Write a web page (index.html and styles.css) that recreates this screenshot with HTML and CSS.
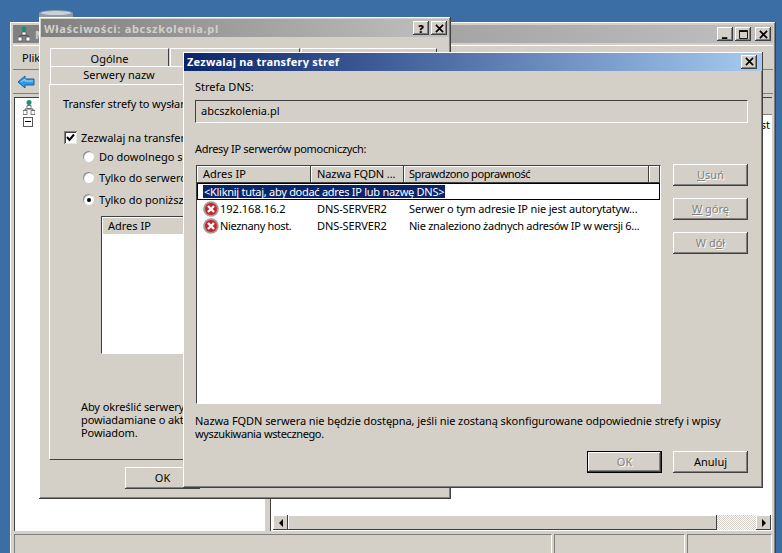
FILE: index.html
```html
<!DOCTYPE html>
<html lang="pl">
<head>
    <meta charset="utf-8">
    <title>Zezwalaj na transfery stref</title>
    <link rel="stylesheet" href="styles.css">
</head>
<body>
    <svg class="desk-icon" width="36" height="8" viewBox="0 0 36 8">
        <path d="M1 3 a17 3 0 0 1 34 0 v5 h-34 z" fill="#8d9aa6"/>
        <ellipse cx="18" cy="3" rx="15" ry="2" fill="#c9d2da"/>
    </svg>

    <!-- konsola w tle -->
    <div class="win main-win">
        <div class="title inactive">
            <svg class="tree-icon" width="12" height="16" viewBox="0 0 12 16"><circle cx="6" cy="3" r="2.500" fill="#1f8f76"/><path d="M6 5v4M2 12V9.500h8V12" fill="none" stroke="#555"/><path d="M4 6h4v3H4zM0 11h4v4H0zM8 11h4v4H8z" fill="#fff" stroke="#555" stroke-width=".8"/></svg>
            <span class="title-text">M</span>
            <span class="title-btns">
                <span class="cap-btn"><svg viewBox="0 0 10 10"><path d="M1 8h6v2H1z"/></svg></span>
                <span class="cap-btn"><svg viewBox="0 0 10 10"><path d="M0.500 1.500h9v8h-9z M0.500 0.500h9v1h-9z" fill="none" stroke="#000"/></svg></span>
                <span class="cap-btn gap"><svg viewBox="0 0 10 10"><path d="M1 1l8 8M9 1l-8 8" stroke="#000" stroke-width="1.800"/></svg></span>
            </span>
        </div>
        <div class="menubar"><span>Plik</span></div>
        <div class="toolbar">
            <svg width="18" height="16" viewBox="0 0 18 16"><path d="M1 8l7-6v3h9v6H8v3z" fill="#2c9be0" stroke="#1c5f9c"/><path d="M4 8l4-3v2h8" fill="none" stroke="#a8e0fa"/></svg>
        </div>
        <div class="panes">
            <div class="tree">
                <svg class="tree-icon" width="12" height="17" viewBox="0 0 12 16"><circle cx="6" cy="3" r="2.500" fill="#1f8f76"/><path d="M6 5v4M2 12V9.500h8V12" fill="none" stroke="#555"/><path d="M4 6h4v3H4zM0 11h4v4H0zM8 11h4v4H8z" fill="#fff" stroke="#555" stroke-width=".8"/></svg>
                <span class="expander"></span>
            </div>
            <div class="right-pane">
                <div class="pane-head"></div>
                <div class="pane-list"><span>st</span></div>
                <div class="hscroll">
                    <span class="sb-btn"><i class="arr-left"></i></span>
                    <span class="sb-thumb"></span>
                    <span class="sb-track"></span>
                    <span class="sb-btn"><i class="arr-right"></i></span>
                </div>
            </div>
        </div>
        <div class="statusbar">
            <span class="st-a"></span><span class="st-b"></span><span class="st-c"></span>
        </div>
    </div>

    <!-- okno wlasciwosci -->
    <div class="win props-win">
        <div class="title inactive">
            <span class="title-text">Właściwości: abcszkolenia.pl</span>
            <span class="title-btns">
                <span class="cap-btn"><b>?</b></span>
                <span class="cap-btn"><svg viewBox="0 0 10 10"><path d="M1 1l8 8M9 1l-8 8" stroke="#000" stroke-width="1.800"/></svg></span>
            </span>
        </div>
        <div class="tabs">
            <div class="tab-row">
                <span class="tab w-a">Ogólne</span>
                <span class="tab w-b"></span>
                <span class="tab w-c"></span>
            </div>
            <div class="tab-row">
                <span class="tab w-d second">Serwery nazw</span>
            </div>
        </div>
        <div class="tab-panel">
            <p class="intro">Transfer strefy to wysłan</p>
            <label class="check-line"><span class="check"><svg width="9" height="9" viewBox="0 0 9 9"><path d="M1 4l2.500 3L8 1.500" fill="none" stroke="#000" stroke-width="2"/></svg></span>Zezwalaj na transfer</label>
            <div class="radios">
                <label class="radio-line"><span class="radio"></span>Do dowolnego se</label>
                <label class="radio-line"><span class="radio"></span>Tylko do serweró</label>
                <label class="radio-line last"><span class="radio on"></span>Tylko do poniższy</label>
            </div>
            <div class="inner-list">
                <div class="inner-head">Adres IP</div>
            </div>
            <p class="hint">Aby określić serwery<br>powiadamiane o aktu<br>Powiadom.</p>
        </div>
        <div class="props-foot"><button class="btn">OK</button></div>
    </div>

    <!-- dialog na wierzchu -->
    <div class="win dialog">
        <div class="title active">
            <span class="title-text">Zezwalaj na transfery stref</span>
            <span class="title-btns">
                <span class="cap-btn"><svg viewBox="0 0 10 10"><path d="M1 1l8 8M9 1l-8 8" stroke="#000" stroke-width="1.800"/></svg></span>
            </span>
        </div>
        <div class="dlg-body">
            <div class="lbl">Strefa DNS:</div>
            <div class="field">abcszkolenia.pl</div>
            <div class="lbl lbl-second">Adresy IP serwerów pomocniczych:</div>
            <div class="list-row">
                <div class="list">
                    <div class="list-head">
                        <span class="col-a">Adres IP</span>
                        <span class="col-b">Nazwa FQDN ...</span>
                        <span class="col-c head-check">Sprawdzono poprawność</span>
                        <span class="col-d"></span>
                    </div>
                    <div class="add-row"><span>&lt;Kliknij tutaj, aby dodać adres IP lub nazwę DNS&gt;</span></div>
                    <div class="row">
                        <span class="col-a cell-ip"><svg class="err" width="16" height="16" viewBox="0 0 16 16"><circle cx="8" cy="8" r="7.800" fill="#a39c9c"/><circle cx="8" cy="8" r="6" fill="#c4252b"/><path d="M5 5l6 6M11 5l-6 6" stroke="#fff" stroke-width="2.400"/></svg>192.168.16.2</span>
                        <span class="col-b">DNS-SERVER2</span>
                        <span class="col-c msg-a">Serwer o tym adresie IP nie jest autorytatyw...</span>
                    </div>
                    <div class="row">
                        <span class="col-a cell-ip host"><svg class="err" width="16" height="16" viewBox="0 0 16 16"><circle cx="8" cy="8" r="7.800" fill="#a39c9c"/><circle cx="8" cy="8" r="6" fill="#c4252b"/><path d="M5 5l6 6M11 5l-6 6" stroke="#fff" stroke-width="2.400"/></svg>Nieznany host.</span>
                        <span class="col-b">DNS-SERVER2</span>
                        <span class="col-c msg-b">Nie znaleziono żadnych adresów IP w wersji 6...</span>
                    </div>
                </div>
                <div class="side-btns">
                    <button class="btn off"><u>U</u>suń</button>
                    <button class="btn off"><u>W</u> górę</button>
                    <button class="btn off">W d<u>ó</u>ł</button>
                </div>
            </div>
            <p class="note">Nazwa FQDN serwera nie będzie dostępna, jeśli nie zostaną skonfigurowane odpowiednie strefy i wpisy<br><span class="note-end">wyszukiwania wstecznego.</span></p>
            <div class="dlg-foot">
                <button class="btn off default">OK</button>
                <button class="btn">Anuluj</button>
            </div>
        </div>
    </div>
</body>
</html>
```

FILE: styles.css
```css
:root {
    --face: #d4d0c8;
    --shadow: #808080;
    --dark: #404040;
}

* {
    box-sizing: border-box;
}

html, body {
    height: 100%;
}

body {
    margin: 0;
    height: 553px;
    overflow: hidden;
    position: relative;
    background-color: #3a6ea5;
    color: #000;
    font-family: "Noto Sans", sans-serif;
    font-size: 11px;
    line-height: 13px;
}

p {
    margin: 0;
}

.desk-icon {
    position: absolute;
    left: 38px;
    top: 10px;
}

/* okna */
.win {
    position: absolute;
    display: flex;
    flex-direction: column;
    background-color: var(--face);
    box-shadow: inset -1px -1px var(--dark), inset 1px 1px #fff, inset -2px -2px var(--shadow);
}
.main-win {
    left: 10px;
    top: 22px;
    width: 766px;
    height: 540px;
    padding: 3px;
}
.props-win {
    left: 39px;
    top: 17px;
    width: 412px;
    height: 482px;
    padding: 2px;
}
.dialog {
    left: 183px;
    top: 52px;
    width: 580px;
    height: 436px;
    padding: 1px;
}

.title {
    flex: none;
    display: flex;
    align-items: center;
    height: 18px;
    padding: 0 2px 0 3px;
    font-weight: bold;
    color: #fff;
}
.inactive {
    background: linear-gradient(to right, #808080, #c0c0c0);
    color: #d4d0c8;
}
.active {
    padding-right: 5px;
    padding-bottom: 1px;
    letter-spacing: .22px;
    background: linear-gradient(to right, #0a246a, #a6caf0);
}
.props-win .title-text {
    letter-spacing: .68px;
}
.title-text {
    flex: 1;
    white-space: nowrap;
    overflow: hidden;
}
.main-win .title {
    gap: 5px;
    padding-left: 5px;
}
.title-btns {
    display: flex;
    gap: 2px;
}
.cap-btn {
    display: flex;
    align-items: center;
    justify-content: center;
    width: 16px;
    height: 14px;
    color: #000;
    background-color: var(--face);
    box-shadow: inset -1px -1px var(--dark), inset 1px 1px #fff, inset -2px -2px var(--shadow);
}
.cap-btn svg {
    width: 9px;
    height: 9px;
}
.cap-btn.gap {
    margin-left: 2px;
}

/* konsola */
.menubar {
    flex: none;
    height: 25px;
    margin-top: 2px;
    padding: 5px 9px;
    border-top: 1px solid #fff;
    border-bottom: 1px solid var(--shadow);
}
.toolbar {
    flex: none;
    height: 24px;
    padding: 4px 4px;
    border-bottom: 1px solid var(--shadow);
}
.panes {
    flex: none;
    display: flex;
    gap: 5px;
    height: 434px;
    margin: 3px 1px 0;
}
.tree {
    display: flex;
    flex-direction: column;
    align-items: flex-start;
    width: 251px;
    padding: 1px 8px;
    background-color: #fff;
    border-left: 1px solid var(--dark);
    border-top: 1px solid var(--dark);
}
.expander {
    width: 10px;
    height: 10px;
    margin-top: 1px;
    position: relative;
    border: 1px solid #555;
}
.expander::after {
    content: "";
    position: absolute;
    left: 1px;
    right: 1px;
    top: 3px;
    height: 1px;
    background-color: #000;
}
.right-pane {
    flex: 1;
    display: flex;
    flex-direction: column;
    background-color: #fff;
    border-left: 1px solid var(--dark);
    border-top: 1px solid var(--dark);
}
.pane-head {
    flex: none;
    height: 17px;
    background-color: var(--face);
    box-shadow: inset 0 -1px var(--shadow);
}
.pane-list {
    flex: 1;
    padding: 3px 2px 0 0;
    text-align: right;
}
.hscroll {
    flex: none;
    display: flex;
    height: 15px;
    margin: 0 1px 1px 2px;
}
.sb-btn {
    flex: none;
    display: flex;
    align-items: center;
    justify-content: center;
    width: 15px;
    background-color: var(--face);
    box-shadow: inset -1px -1px var(--dark), inset 1px 1px #fff;
}
.sb-thumb {
    flex: none;
    width: 429px;
    background-color: var(--face);
    box-shadow: inset -1px -1px var(--dark), inset 1px 1px #fff;
}
.sb-track {
    flex: 1;
    background: repeating-conic-gradient(#fff 0 25%, var(--face) 0 50%) 0 0 / 2px 2px;
}
.arr-left, .arr-right {
    width: 0;
    height: 0;
    border-top: 4px solid transparent;
    border-bottom: 4px solid transparent;
}
.arr-left {
    border-right: 4px solid #000;
}
.arr-right {
    border-left: 4px solid #000;
}
.statusbar {
    flex: none;
    display: flex;
    gap: 2px;
    height: 20px;
    margin: 3px 1px 0;
}
.statusbar span {
    border-top: 1px solid var(--shadow);
    border-left: 1px solid var(--shadow);
    border-right: 1px solid #fff;
}
.st-a {
    width: 539px;
}
.st-b {
    width: 131px;
}
.st-c {
    width: 85px;
}

/* wlasciwosci */
.tabs {
    flex: none;
    padding: 11px 0 0 9px;
}
.tab-row {
    display: flex;
    gap: 1px;
    height: 18px;
}
.tab {
    display: block;
    height: 20px;
    padding-top: 3px;
    text-align: center;
    background-color: var(--face);
    border-top: 1px solid #fff;
    border-left: 1px solid #fff;
    border-right: 1px solid var(--dark);
}
.tab.second {
    height: 18px;
    padding-top: 1px;
    border-right-color: #fff;
}
.w-a {
    width: 119px;
}
.w-b {
    width: 130px;
}
.w-c {
    width: 136px;
}
.w-d {
    width: 138px;
}
.tab-panel {
    flex: none;
    display: flex;
    flex-direction: column;
    align-items: flex-start;
    height: 376px;
    width: 392px;
    margin-left: 8px;
    padding: 12px 13px 0;
    border-top: 1px solid #fff;
    border-left: 1px solid #fff;
    border-bottom: 1px solid var(--dark);
    border-right: 1px solid var(--dark);
}
.intro {
    white-space: nowrap;
    letter-spacing: -.1px;
}
.check-line, .radio-line {
    display: flex;
    align-items: center;
    white-space: nowrap;
}
.check-line {
    gap: 4px;
    margin-top: 20px;
    margin-left: 1px;
    height: 14px;
}
.check {
    display: flex;
    align-items: center;
    justify-content: center;
    width: 13px;
    height: 13px;
    background-color: #fff;
    box-shadow: inset 1px 1px var(--shadow), inset -1px -1px #e8e6e0, inset 2px 2px var(--dark);
}
.radios {
    display: flex;
    flex-direction: column;
    gap: 7px;
    margin: 5px 0 0 20px;
}
.radio-line {
    gap: 5px;
    height: 14px;
}
.radio-line.last {
    margin-top: 1px;
}
.radio {
    position: relative;
    width: 11px;
    height: 11px;
    background-color: #fff;
    border-radius: 50%;
    box-shadow: inset 1px 1px 1px #808080;
}
.radio.on::after {
    content: "";
    position: absolute;
    left: 4px;
    top: 4px;
    width: 4px;
    height: 4px;
    border-radius: 50%;
    background-color: #000;
}
.inner-list {
    width: 300px;
    height: 138px;
    margin: 10px 0 0 38px;
    background-color: #fff;
    border-top: 1px solid var(--dark);
    border-left: 1px solid var(--dark);
    border-bottom: 1px solid #fff;
}
.inner-head {
    height: 17px;
    padding: 2px 6px;
    background-color: var(--face);
    box-shadow: inset 1px 1px #fff;
}
.hint {
    margin: 46px 0 0 18px;
    white-space: nowrap;
    letter-spacing: -.1px;
}
.props-foot {
    display: flex;
    padding: 7px 0 0 84px;
}

/* przyciski */
.btn {
    flex: none;
    width: 75px;
    height: 22px;
    padding: 0 0 1px;
    border: 0;
    font: inherit;
    color: #000;
    background-color: var(--face);
    box-shadow: inset -1px -1px var(--dark), inset 1px 1px #fff, inset -2px -2px var(--shadow);
}
.btn.off {
    color: #808080;
    text-shadow: 1px 1px #fff;
}
.btn.default {
    box-shadow: inset 0 0 0 1px #000, inset -2px -2px var(--dark), inset 2px 2px #fff, inset -3px -3px var(--shadow);
}

/* dialog */
.dlg-body {
    flex: 1;
    padding: 9px 14px 0 11px;
}
.lbl {
    height: 14px;
    line-height: 14px;
}
.lbl-second {
    margin-top: 19px;
    letter-spacing: -.3px;
}
.field {
    height: 23px;
    margin-top: 6px;
    padding: 3px 5px;
    border-top: 1px solid var(--dark);
    border-left: 1px solid var(--dark);
    border-bottom: 1px solid #fff;
    border-right: 1px solid #fff;
}
.list-row {
    display: flex;
    gap: 12px;
    margin-top: 9px;
    padding-left: 1px;
}
.list {
    flex: none;
    width: 465px;
    height: 239px;
    background-color: #fff;
    border-top: 1px solid var(--dark);
    border-left: 1px solid var(--dark);
    border-bottom: 1px solid #fff;
    border-right: 1px solid #fff;
}
.list-head {
    display: flex;
    height: 17px;
}
.list-head span {
    height: 17px;
    padding-top: 1px;
    background-color: var(--face);
    box-shadow: inset -1px -1px var(--dark), inset 1px 1px #fff;
}
.col-a, .col-b, .col-c {
    flex: none;
    padding-left: 6px;
    white-space: nowrap;
}
.col-a {
    width: 114px;
}
.col-b {
    width: 93px;
    letter-spacing: -.1px;
}
.col-c {
    width: 245px;
    padding-left: 5px;
}
.col-d {
    flex: 1;
}
.head-check {
    letter-spacing: -.43px;
}
.msg-a {
    letter-spacing: -.15px;
}
.msg-b {
    letter-spacing: -.28px;
}
.add-row {
    display: flex;
    align-items: center;
    height: 17px;
    padding-left: 5px;
    border: 1px solid #000;
}
.add-row span {
    padding: 0 1px;
    color: #fff;
    background-color: #0a246a;
    letter-spacing: -.28px;
}
.row {
    display: flex;
    align-items: center;
    height: 17px;
}
.cell-ip {
    display: flex;
    align-items: center;
}
.host {
    letter-spacing: -.35px;
}
.err {
    flex: none;
    margin-right: 1px;
}
.side-btns {
    display: flex;
    flex-direction: column;
    gap: 12px;
    margin-top: -1px;
}
.note {
    margin-top: 10px;
    letter-spacing: -.07px;
}
.note-end {
    letter-spacing: -.37px;
}
.dlg-foot {
    display: flex;
    justify-content: flex-end;
    gap: 11px;
    margin-top: 11px;
}
```
